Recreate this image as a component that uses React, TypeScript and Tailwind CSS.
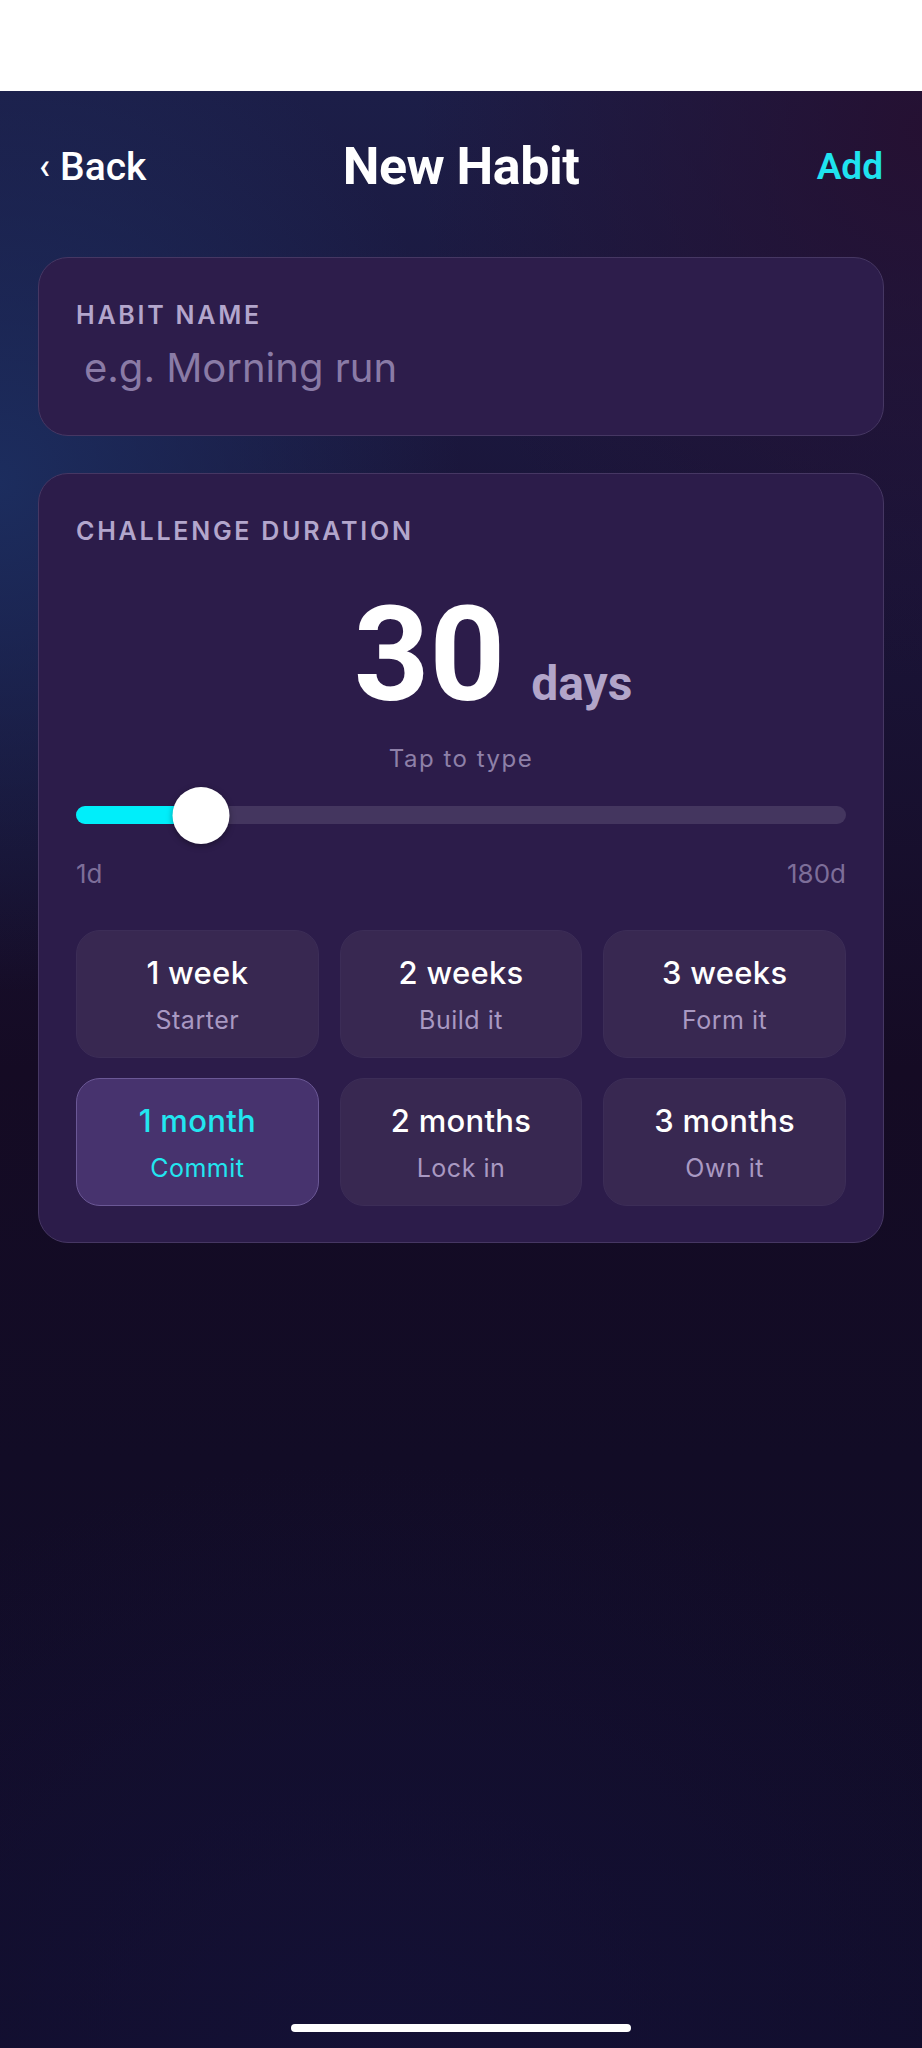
import { useState } from 'react'

const presets = [
  { label: '1 week', sub: 'Starter', days: 7 },
  { label: '2 weeks', sub: 'Build it', days: 14 },
  { label: '3 weeks', sub: 'Form it', days: 21 },
  { label: '1 month', sub: 'Commit', days: 30 },
  { label: '2 months', sub: 'Lock in', days: 60 },
  { label: '3 months', sub: 'Own it', days: 90 },
]

const MIN = 1
const MAX = 180

export default function App() {
  const [days, setDays] = useState(30)
  const [name, setName] = useState('')
  const pct = ((days - MIN) / (MAX - MIN)) * 100

  return (
    <div className="min-h-[2048px] w-full bg-white font-['Inter',sans-serif]">
      <div className="h-[91px] bg-white" />

      <main className="flex min-h-[1957px] flex-col bg-[radial-gradient(ellipse_50%_26%_at_0%_20%,rgba(28,46,96,0.95),transparent),radial-gradient(ellipse_55%_28%_at_100%_2%,rgba(38,15,48,0.9),transparent),radial-gradient(ellipse_80%_30%_at_40%_100%,rgba(20,17,54,0.9),transparent),linear-gradient(180deg,#1c1e48_0%,#1a1438_25%,#150b24_50%,#120c26_70%,#110d2b_100%)]">
        {/* header */}
        <header className="grid h-[152px] grid-cols-[1fr_auto_1fr] items-center px-[39px] font-['Roboto',sans-serif]">
          <button type="button" className="flex items-center gap-[10px] justify-self-start text-[39px] font-medium text-white">
            <span className="text-[36px] leading-none">‹</span>
            <span>Back</span>
          </button>
          <h1 className="text-[52px] font-bold tracking-[-0.5px] text-white">New Habit</h1>
          <button type="button" className="justify-self-end text-[37px] font-semibold text-[#1fe3ef]">
            Add
          </button>
        </header>

        {/* habit name */}
        <section className="mx-[38px] mt-[14px] rounded-[30px] border border-[#463763] bg-[#2d1d4b] px-[37px] pb-[43px] pt-[42px]">
          <p className="text-[25px] font-semibold leading-[30px] tracking-[0.11em] text-[#b3a6cc]">HABIT NAME</p>
          <input
            value={name}
            onChange={(e) => setName(e.target.value)}
            placeholder="e.g. Morning run"
            className="mt-[14px] h-[48px] w-full bg-transparent px-[8px] text-[40px] leading-[48px] text-white outline-none placeholder:text-[#8a7ba6]"
          />
        </section>

        {/* duration */}
        <section className="mx-[38px] mt-[37px] rounded-[30px] border border-[#463763] bg-[#2c1c4a] px-[37px] pb-[36px] pt-[42px]">
          <p className="text-[25px] font-semibold leading-[30px] tracking-[0.11em] text-[#b3a6cc]">CHALLENGE DURATION</p>

          <div className="mt-[43px] flex items-baseline justify-center pl-[64px] font-['Roboto',sans-serif]">
            <span className="text-[132px] font-bold leading-none text-white">{days}</span>
            <span className="ml-[26px] text-[48px] font-bold leading-none text-[#b2a5c9]">days</span>
          </div>

          <p className="mt-[23px] text-center text-[24px] leading-[30px] tracking-[1.5px] text-[#8e80a8]">Tap to type</p>

          <div className="relative mt-[13px] h-[57px]">
            <div className="absolute inset-x-0 top-[19px] h-[18px] rounded-full bg-[#44365f]" />
            <div
              className="absolute left-0 top-[19px] h-[18px] rounded-full bg-[#00eefa]"
              style={{ width: `${pct}%` }}
            />
            <div
              className="absolute top-0 h-[57px] w-[57px] -translate-x-1/2 rounded-full bg-white shadow-[0_2px_6px_rgba(0,0,0,0.35)]"
              style={{ left: `${pct}%` }}
            />
          </div>

          <div className="mt-[15px] flex justify-between text-[26px] leading-[30px] text-[#7d6e99]">
            <span>1d</span>
            <span>180d</span>
          </div>

          <div className="mt-[41px] grid grid-cols-3 gap-x-[21px] gap-y-[20px]">
            {presets.map((p) => {
              const active = p.days === days
              return (
                <button
                  key={p.label}
                  type="button"
                  onClick={() => setDays(p.days)}
                  className={`flex h-[128px] flex-col items-center justify-center rounded-[24px] border ${
                    active ? 'border-[#6b5896] bg-[#47336e]' : 'border-[#3c2d57] bg-[#382851]'
                  }`}
                >
                  <span
                    className={`text-[31px] font-medium leading-[38px] tracking-[0.3px] ${
                      active ? 'text-[#22e6f0]' : 'text-white'
                    }`}
                  >
                    {p.label}
                  </span>
                  <span
                    className={`mt-[13px] text-[25px] leading-[30px] tracking-[0.5px] ${
                      active ? 'text-[#22e6f0]' : 'text-[#a999c2]'
                    }`}
                  >
                    {p.sub}
                  </span>
                </button>
              )
            })}
          </div>
        </section>

        <div className="mt-auto flex justify-center pb-[16px]">
          <div className="h-[8px] w-[340px] rounded-full bg-white" />
        </div>
      </main>
    </div>
  )
}
